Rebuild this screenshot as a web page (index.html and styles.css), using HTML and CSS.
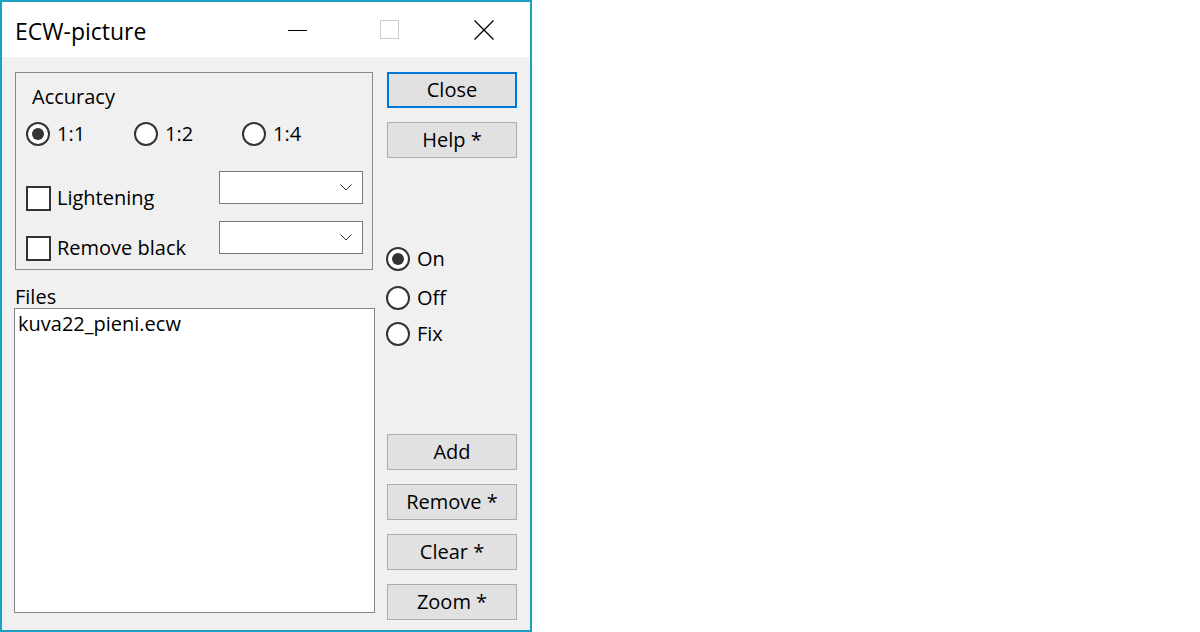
FILE: index.html
```html
<!DOCTYPE html>
<html>
<head>
<meta charset="utf-8">
<link rel="stylesheet" href="styles.css">
</head>
<body>
<div class="window">
  <div class="titlebar">
    <span class="title">ECW-picture</span>
    <div class="controls">
      <span class="ctl ctl-min"><svg width="20" height="20" viewBox="0 0 20 20"><line x1="0" y1="10.5" x2="19" y2="10.5" stroke="#000" stroke-width="1"/></svg></span>
      <span class="ctl ctl-max"><svg width="20" height="20" viewBox="0 0 20 20"><rect x="0.5" y="0.5" width="18" height="18" fill="none" stroke="#cccccc" stroke-width="1"/></svg></span>
      <span class="ctl ctl-close"><svg width="20" height="20" viewBox="0 0 20 20"><path d="M0.5 0.5 L19.5 19.5 M19.5 0.5 L0.5 19.5" stroke="#000" stroke-width="1.3" fill="none"/></svg></span>
    </div>
  </div>
  <div class="content">
    <div class="left">
      <div class="group">
        <div class="group-title">Accuracy</div>
        <div class="acc-row">
          <label class="radio r1"><span class="circle checked"></span>1:1</label>
          <label class="radio r2"><span class="circle"></span>1:2</label>
          <label class="radio r3"><span class="circle"></span>1:4</label>
        </div>
        <div class="opt-row first">
          <label class="check"><span class="box"></span>Lightening</label>
          <div class="combo"><svg width="12" height="7" viewBox="0 0 12 7"><path d="M0.5 0.5 L6 6 L11.5 0.5" stroke="#333" stroke-width="1" fill="none"/></svg></div>
        </div>
        <div class="opt-row">
          <label class="check"><span class="box"></span>Remove black</label>
          <div class="combo"><svg width="12" height="7" viewBox="0 0 12 7"><path d="M0.5 0.5 L6 6 L11.5 0.5" stroke="#333" stroke-width="1" fill="none"/></svg></div>
        </div>
      </div>
      <div class="files-label">Files</div>
      <div class="listbox">
        <div class="item">kuva22_pieni.ecw</div>
      </div>
    </div>
    <div class="right">
      <button class="btn btn-default">Close</button>
      <button class="btn btn-help">Help *</button>
      <div class="modes">
        <label class="radio"><span class="circle checked"></span>On</label>
        <label class="radio mode-off"><span class="circle"></span>Off</label>
        <label class="radio mode-fix"><span class="circle"></span>Fix</label>
      </div>
      <div class="bottom-btns">
        <button class="btn">Add</button>
        <button class="btn">Remove *</button>
        <button class="btn">Clear *</button>
        <button class="btn">Zoom *</button>
      </div>
    </div>
  </div>
</div>
</body>
</html>
```
FILE: styles.css
```css
html, body {
  margin: 0;
  padding: 0;
  background: #ffffff;
}
body {
  font-family: "Open Sans", "Noto Sans", "Liberation Sans", sans-serif;
  font-size: 20px;
  color: #000;
}
.window {
  width: 532px;
  height: 632px;
  box-sizing: border-box;
  border: 2px solid #1ba1c4;
  display: flex;
  flex-direction: column;
  background: #f0f0f0;
}
.titlebar {
  height: 55px;
  background: #ffffff;
  display: flex;
  align-items: center;
  padding-left: 13px;
  flex-shrink: 0;
}
.title {
  font-size: 23px;
  line-height: 26px;
  margin-top: 2px;
}
.controls {
  margin-left: auto;
  display: flex;
  align-items: center;
  margin-top: 0px;
}
.ctl {
  display: block;
  width: 20px;
  height: 20px;
}
.ctl svg { display: block; }
.ctl-min { margin-right: 72px; }
.ctl-max { margin-right: 74px; }
.ctl-close { margin-right: 36px; }

.content {
  flex: 1;
  display: flex;
}
.left {
  padding-left: 13px;
  width: 361px;
  display: flex;
  flex-direction: column;
}
.group {
  margin-top: 15px;
  width: 358px;
  height: 198px;
  box-sizing: border-box;
  border: 1px solid #8a8a8a;
  padding: 12px 0 0 10px;
}
.group-title {
  line-height: 24px;
  padding-left: 6px;
}
.acc-row {
  display: flex;
  margin-top: 12px;
  height: 26px;
  align-items: center;
}
.radio {
  display: flex;
  align-items: center;
  line-height: 24px;
}
.circle {
  width: 24px;
  height: 24px;
  box-sizing: border-box;
  border: 2px solid #333;
  border-radius: 50%;
  background: #fff;
  margin-right: 7px;
  position: relative;
  flex-shrink: 0;
}
.circle.checked::after {
  content: "";
  position: absolute;
  left: 4px;
  top: 4px;
  width: 12px;
  height: 12px;
  border-radius: 50%;
  background: #333;
}
.r1 { width: 108px; }
.r2 { width: 108px; }
.opt-row {
  display: flex;
  align-items: center;
  justify-content: space-between;
  height: 34px;
  margin-top: 16px;
  padding-right: 9px;
}
.opt-row.first { margin-top: 24px; }
.check {
  display: flex;
  align-items: center;
  line-height: 24px;
  margin-top: 20px;
}
.box {
  width: 25px;
  height: 25px;
  box-sizing: border-box;
  border: 2px solid #333;
  background: #fff;
  margin-right: 6px;
}
.combo {
  width: 144px;
  height: 33px;
  box-sizing: border-box;
  border: 1px solid #7a7a7a;
  background: #fff;
  display: flex;
  align-items: center;
  justify-content: flex-end;
  padding-right: 10px;
  align-self: flex-start;
}
.combo svg { display: block; }

.files-label {
  margin-top: 16px;
  line-height: 22px;
}
.listbox {
  margin-left: -1px;
  margin-top: 0px;
  width: 361px;
  height: 305px;
  box-sizing: border-box;
  border: 1px solid #828790;
  background: #fff;
  padding: 3px 3px;
}
.item {
  line-height: 24px;
}

.right {
  margin-left: 11px;
  width: 130px;
  display: flex;
  flex-direction: column;
}
.btn {
  width: 130px;
  height: 36px;
  box-sizing: border-box;
  border: 1px solid #adadad;
  background: #e1e1e1;
  font-family: inherit;
  font-size: 20px;
  color: #000;
  padding: 0;
  line-height: 24px;
  display: block;
}
.btn-default {
  margin-top: 15px;
  border: 2px solid #0078d7;
}
.btn-help { margin-top: 14px; }
.modes {
  margin-top: 89px;
  margin-left: -1px;
  display: flex;
  flex-direction: column;
}
.mode-off { margin-top: 15px; }
.mode-fix { margin-top: 12px; }
.bottom-btns {
  margin-top: auto;
  margin-bottom: 10px;
  display: flex;
  flex-direction: column;
  gap: 14px;
}
```
